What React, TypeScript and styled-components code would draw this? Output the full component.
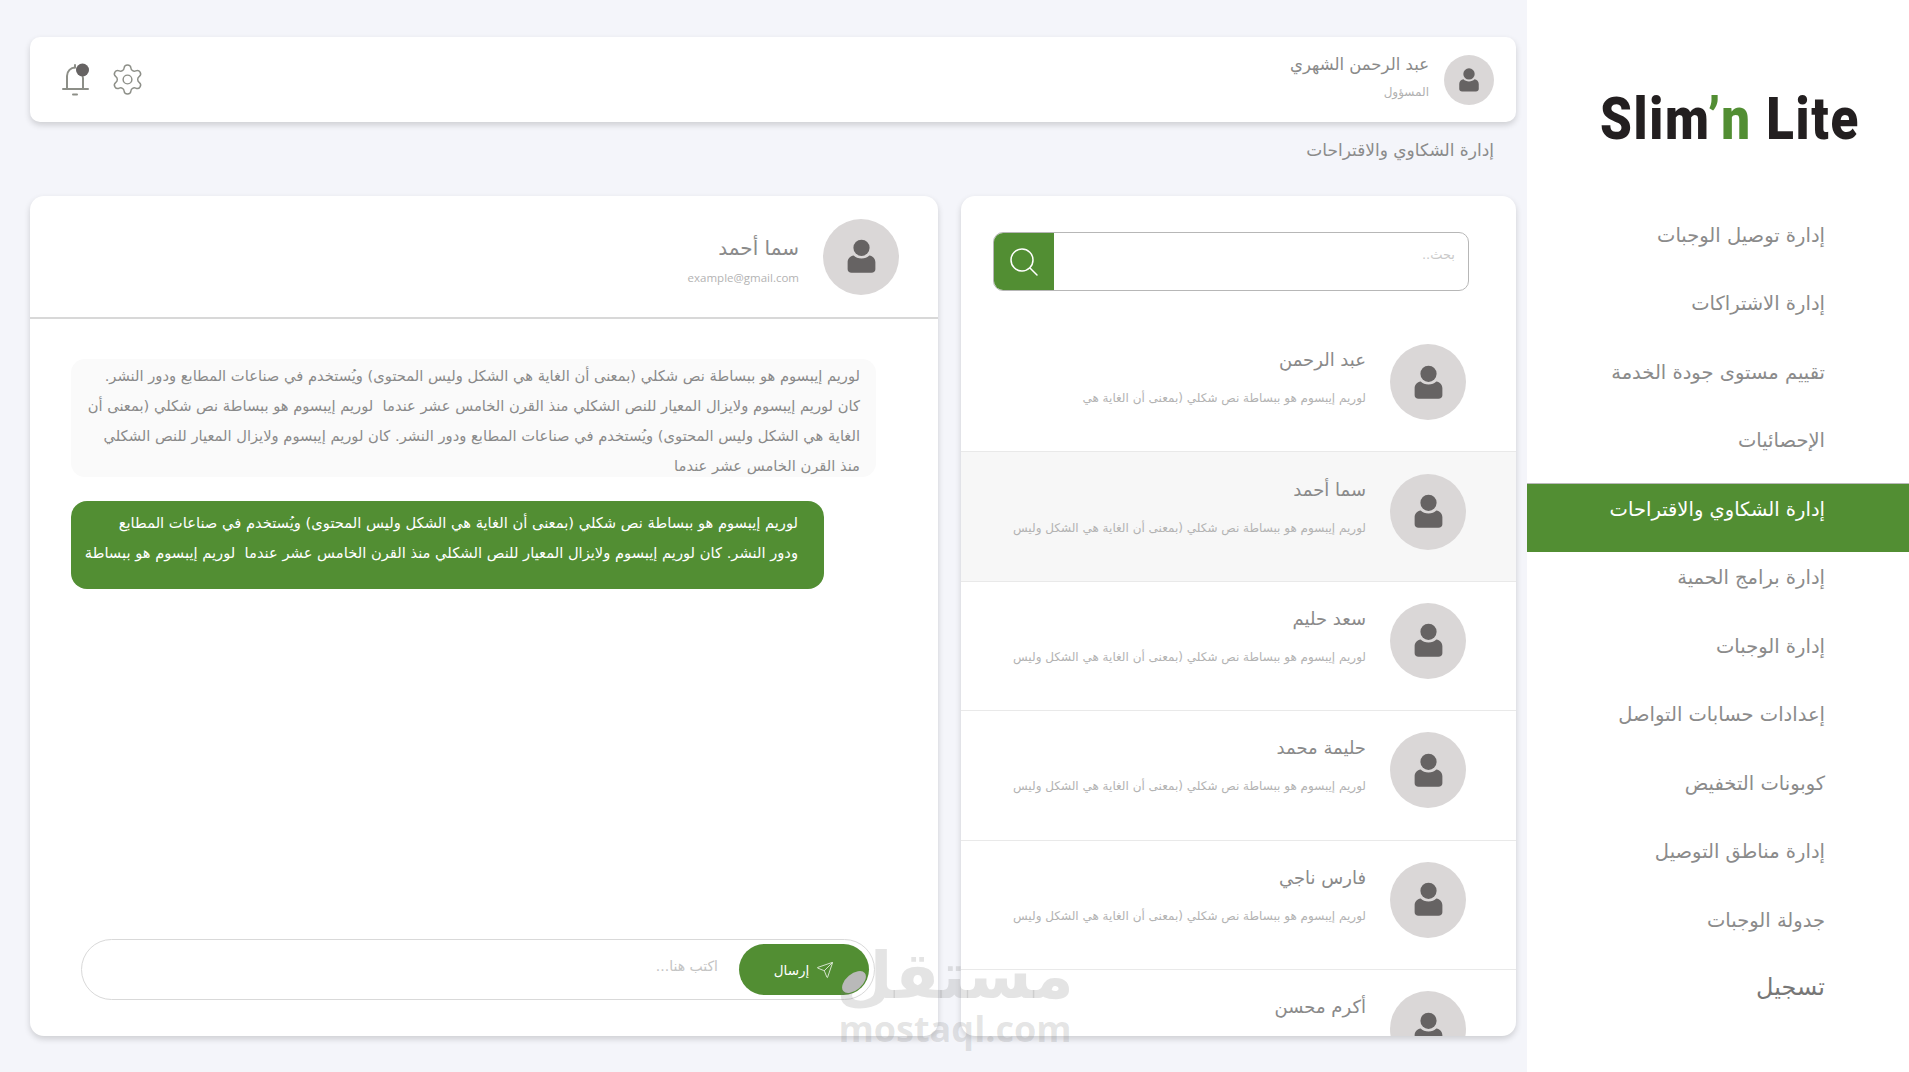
import { Send } from "lucide-react";
import styled, { createGlobalStyle } from "styled-components";

const GREEN = "#528e33";

const MENU = [
  "إدارة توصيل الوجبات",
  "إدارة الاشتراكات",
  "تقييم مستوى جودة الخدمة",
  "الإحصائيات",
  "إدارة الشكاوي والاقتراحات",
  "إدارة برامج الحمية",
  "إدارة الوجبات",
  "إعدادات حسابات التواصل",
  "كوبونات التخفيض",
  "إدارة مناطق التوصيل",
  "جدولة الوجبات",
];

const LONG_SUB = "لوريم إيبسوم هو ببساطة نص شكلي (بمعنى أن الغاية هي الشكل وليس";

const CONTACTS = [
  { name: "عبد الرحمن", sub: "لوريم إيبسوم هو ببساطة نص شكلي (بمعنى أن الغاية هي" },
  { name: "سما أحمد", sub: LONG_SUB, active: true },
  { name: "سعد حليم", sub: LONG_SUB },
  { name: "حليمة محمد", sub: LONG_SUB },
  { name: "فارس ناجي", sub: LONG_SUB },
  { name: "أكرم محسن", sub: LONG_SUB },
];

const GlobalStyle = createGlobalStyle`
  html, body {
    margin: 0;
    padding: 0;
    height: 100%;
    overflow: hidden;
    background: #f4f5fa;
    font-family: "DejaVu Sans", "Noto Sans", sans-serif;
  }
  * {
    box-sizing: border-box;
  }
`;

const Page = styled.div`
  position: relative;
  display: grid;
  grid-template-columns: 382px 1fr;
  grid-template-rows: 1072px;
  width: 1909px;
  height: 1072px;
  overflow: hidden;
`;

const Sidebar = styled.aside`
  background: #ffffff;
  display: flex;
  flex-direction: column;
`;

const Logo = styled.div`
  direction: ltr;
  flex: none;
  height: 209px;
  padding: 84px 0 0 73px;
  font-family: Roboto, sans-serif;
  font-weight: 900;
  font-size: 60px;
  line-height: 70px;
  color: #231f20;
  white-space: nowrap;
`;

const LogoText = styled.span`
  display: inline-block;
  transform: scaleX(0.85);
  transform-origin: left center;
  letter-spacing: 2px;

  b {
    font-weight: 900;
    color: ${GREEN};
  }
`;

const MenuItem = styled.div<{ $active?: boolean }>`
  flex: none;
  height: 68.5px;
  display: flex;
  align-items: center;
  padding: 0 84px 17px 0;
  font-size: 19.5px;
  color: ${(p) => (p.$active ? "#ffffff" : "#8b8b8b")};
  background: ${(p) => (p.$active ? GREEN : "transparent")};
  border-top: 1px solid ${(p) => (p.$active ? "#b9b9b9" : "transparent")};
`;

const Logout = styled(MenuItem)`
  padding-bottom: 21px;
  font-size: 24px;
  color: #777777;
`;

const Main = styled.main`
  min-height: 0;
  display: flex;
  flex-direction: column;
  padding: 37px 11px 36px 30px;
`;

const TopBar = styled.header`
  height: 85px;
  flex: none;
  display: flex;
  align-items: center;
  justify-content: space-between;
  padding: 0 22px 0 30px;
  background: #ffffff;
  border-radius: 10px;
  box-shadow: 0 3px 6px rgba(0, 0, 0, 0.16);
`;

const Who = styled.div`
  display: flex;
  align-items: center;
  gap: 15px;
`;

const WhoText = styled.div`
  display: flex;
  flex-direction: column;
  gap: 7px;
  margin-top: -6px;
`;

const WhoName = styled.span`
  font-size: 16.5px;
  line-height: 24px;
  color: #8a8a8a;
`;

const WhoRole = styled.span`
  font-size: 12px;
  line-height: 16px;
  color: #b0b0b0;
`;

const Actions = styled.div`
  display: flex;
  align-items: center;
  gap: 18px;
`;

const PageTitle = styled.div`
  flex: none;
  height: 74px;
  padding: 15px 22px 0 0;
  font-size: 17px;
  line-height: 26px;
  color: #8b8b8b;
`;

const Panels = styled.div`
  flex: 1;
  min-height: 0;
  display: grid;
  grid-template-columns: 555px 908px;
  grid-template-rows: minmax(0, 1fr);
  gap: 23px;
`;

const Card = styled.section`
  min-height: 0;
  background: #ffffff;
  border-radius: 14px;
  box-shadow: 0 3px 6px rgba(0, 0, 0, 0.16);
  overflow: hidden;
  display: flex;
  flex-direction: column;
`;

const SearchBar = styled.div`
  flex: none;
  display: flex;
  height: 59px;
  margin: 36px 47px 32px 32px;
  border: 1.5px solid #b7b7b7;
  border-radius: 10px;
  overflow: hidden;
`;

const SearchInput = styled.div`
  flex: 1;
  padding: 12px 13px 0 0;
  font-size: 13px;
  line-height: 20px;
  color: #c9c9c9;
`;

const SearchButton = styled.div`
  width: 60px;
  background: ${GREEN};
  display: flex;
  align-items: center;
  justify-content: center;
`;

const Row = styled.div<{ $active?: boolean }>`
  flex: none;
  height: 129.4px;
  display: flex;
  align-items: center;
  gap: 24px;
  padding: 0 50px 10px 0;
  background: ${(p) => (p.$active ? "#f7f7f7" : "transparent")};
  border-bottom: 1px solid #e9e9e9;
`;

const RowText = styled.div`
  display: flex;
  flex-direction: column;
  gap: 18px;
  margin-top: -10px;
`;

const RowName = styled.span`
  font-size: 18px;
  line-height: 24px;
  color: #8a8a8a;
`;

const RowSub = styled.span`
  font-size: 12px;
  line-height: 16px;
  color: #b3b3b3;
  white-space: nowrap;
`;

const Avatar = styled.div<{ $size: number }>`
  flex: none;
  width: ${(p) => p.$size}px;
  height: ${(p) => p.$size}px;
  border-radius: 50%;
  background: #dad7d7;
  display: flex;
  align-items: center;
  justify-content: center;
`;

const ChatHeader = styled.div`
  flex: none;
  height: 123px;
  display: flex;
  align-items: center;
  gap: 24px;
  padding: 0 39px 0 0;
  border-bottom: 2px solid #d8d8d8;
`;

const ChatText = styled.div`
  display: flex;
  flex-direction: column;
  gap: 9px;
  margin-top: 8px;
`;

const ChatName = styled.span`
  font-size: 20px;
  line-height: 26px;
  color: #8a8a8a;
`;

const ChatMail = styled.span`
  font-size: 11.5px;
  line-height: 16px;
  color: #b3b3b3;
  font-family: "Open Sans", sans-serif;
`;

const Messages = styled.div`
  flex: 1;
  min-height: 0;
  display: flex;
  flex-direction: column;
  gap: 24px;
  padding: 40px 62px 0 41px;
`;

const Bubble = styled.div`
  font-size: 14.7px;
  line-height: 30px;
`;

const Incoming = styled(Bubble)`
  height: 118px;
  padding: 2px 16px 0 12px;
  background: #fafafa;
  border-radius: 14px;
  color: #8a8a8a;
`;

const Outgoing = styled(Bubble)`
  height: 88px;
  margin-right: 52px;
  padding: 7px 26px 0 8px;
  background: ${GREEN};
  border-radius: 16px;
  color: #ffffff;
`;

const Composer = styled.div`
  flex: none;
  height: 61px;
  margin: 0 63px 36px 51px;
  display: flex;
  align-items: center;
  gap: 21px;
  padding: 0 5px;
  border: 1.5px solid #d9d9d9;
  border-radius: 31px;
`;

const SendButton = styled.div`
  flex: none;
  width: 130px;
  height: 51px;
  display: flex;
  align-items: center;
  justify-content: center;
  gap: 7px;
  background: ${GREEN};
  border-radius: 26px;
  color: #ffffff;
  font-size: 13.5px;
`;

const ComposerHint = styled.span`
  font-size: 14px;
  line-height: 20px;
  margin-top: -7px;
  color: #c4c4c4;
`;

const Watermark = styled.div`
  position: absolute;
  left: 838px;
  top: 935px;
  width: 234px;
  display: flex;
  flex-direction: column;
  align-items: center;
  color: rgba(120, 120, 120, 0.2);
  pointer-events: none;
`;

const WatermarkAr = styled.span`
  font-size: 65px;
  line-height: 82px;
  font-weight: 700;
`;

const WatermarkEn = styled.span`
  direction: ltr;
  font-family: "Open Sans", sans-serif;
  font-weight: 700;
  font-size: 36px;
  line-height: 40px;
  margin-top: -8px;
`;

const WatermarkSwirl = styled.svg`
  position: absolute;
  left: 2px;
  top: 34px;
`;

const UserIcon = ({ size }: { size: number }) => (
  <svg width={size} height={size} viewBox="0 0 32 32" fill="#666363">
    <circle cx="16" cy="8.5" r="7" />
    <path d="M9.2 15.2c1.6 1.6 4 2.6 6.8 2.6s5.2-1 6.8-2.6c3 .6 5.2 2.6 5.2 5.8v6c0 2-1.4 3-3.4 3H7.4C5.4 30 4 29 4 27v-6c0-3.2 2.2-5.2 5.2-5.8z" />
  </svg>
);

const BellIcon = () => (
  <svg width="32" height="36" viewBox="0 0 32 36" fill="none" stroke="#8d8f88" strokeWidth="2" strokeLinecap="round">
    <path d="M7 26V14c0-5 4-8.5 8-8.5" />
    <path d="M21 12c1.5 1 2 2.5 2 4v10" />
    <path d="M3 27h25" />
    <path d="M15 3v2.5" />
    <path d="M13 32.5h4" />
    <circle cx="22.5" cy="8" r="6.5" fill="#666363" stroke="none" />
  </svg>
);

const GearIcon = () => (
  <svg width="35" height="35" viewBox="0 0 24 24" fill="none" stroke="#8d8f88" strokeWidth="1" strokeLinecap="round" strokeLinejoin="round">
    <path d="M9.671 4.136a2.34 2.34 0 0 1 4.659 0 2.34 2.34 0 0 0 3.319 1.915 2.34 2.34 0 0 1 2.33 4.033 2.34 2.34 0 0 0 0 3.831 2.34 2.34 0 0 1-2.33 4.033 2.34 2.34 0 0 0-3.319 1.915 2.34 2.34 0 0 1-4.659 0 2.34 2.34 0 0 0-3.32-1.915 2.34 2.34 0 0 1-2.33-4.033 2.34 2.34 0 0 0 0-3.831A2.34 2.34 0 0 1 6.351 6.051a2.34 2.34 0 0 0 3.32-1.915" />
    <circle cx="12" cy="12" r="3" />
  </svg>
);

const SearchIcon = () => (
  <svg width="30" height="30" viewBox="0 0 30 30" fill="none" stroke="#ffffff" strokeWidth="1.5" strokeLinecap="round">
    <circle cx="13" cy="13" r="11" />
    <path d="M21 21l7 7" />
  </svg>
);

const App = () => {
  return (
    <Page dir="rtl">
      <GlobalStyle />
      <Sidebar>
        <Logo>
          <LogoText>
            Slim<b>’n</b> Lite
          </LogoText>
        </Logo>
        {MENU.map((item) => (
          <MenuItem key={item} $active={item === "إدارة الشكاوي والاقتراحات"}>
            {item}
          </MenuItem>
        ))}
        <Logout>تسجيل</Logout>
      </Sidebar>

      <Main>
        <TopBar>
          <Who>
            <Avatar $size={50}>
              <UserIcon size={26} />
            </Avatar>
            <WhoText>
              <WhoName>عبد الرحمن الشهري</WhoName>
              <WhoRole>المسؤول</WhoRole>
            </WhoText>
          </Who>
          <Actions>
            <GearIcon />
            <BellIcon />
          </Actions>
        </TopBar>

        <PageTitle>إدارة الشكاوي والاقتراحات</PageTitle>

        <Panels>
          <Card>
            <SearchBar>
              <SearchInput>بحث..</SearchInput>
              <SearchButton>
                <SearchIcon />
              </SearchButton>
            </SearchBar>
            {CONTACTS.map((contact) => (
              <Row key={contact.name} $active={contact.active}>
                <Avatar $size={76}>
                  <UserIcon size={37} />
                </Avatar>
                <RowText>
                  <RowName>{contact.name}</RowName>
                  <RowSub>{contact.sub}</RowSub>
                </RowText>
              </Row>
            ))}
          </Card>

          <Card>
            <ChatHeader>
              <Avatar $size={76}>
                <UserIcon size={37} />
              </Avatar>
              <ChatText>
                <ChatName>سما أحمد</ChatName>
                <ChatMail>example@gmail.com</ChatMail>
              </ChatText>
            </ChatHeader>
            <Messages>
              <Incoming>
                لوريم إيبسوم هو ببساطة نص شكلي (بمعنى أن الغاية هي الشكل وليس المحتوى) ويُستخدم في صناعات المطابع ودور النشر. كان لوريم إيبسوم ولايزال المعيار للنص الشكلي منذ القرن الخامس عشر عندما &nbsp;لوريم إيبسوم هو ببساطة نص شكلي (بمعنى أن الغاية هي الشكل وليس المحتوى) ويُستخدم في صناعات المطابع ودور النشر. كان لوريم إيبسوم ولايزال المعيار للنص الشكلي منذ القرن الخامس عشر عندما
              </Incoming>
              <Outgoing>
                لوريم إيبسوم هو ببساطة نص شكلي (بمعنى أن الغاية هي الشكل وليس المحتوى) ويُستخدم في صناعات المطابع
                <br />
                ودور النشر. كان لوريم إيبسوم ولايزال المعيار للنص الشكلي منذ القرن الخامس عشر عندما &nbsp;لوريم إيبسوم هو ببساطة
              </Outgoing>
            </Messages>
            <Composer>
              <SendButton>
                <Send size={18} strokeWidth={1} />
                إرسال
              </SendButton>
              <ComposerHint>اكتب هنا...</ComposerHint>
            </Composer>
          </Card>
        </Panels>
      </Main>

      <Watermark>
        <WatermarkSwirl width="28" height="26" viewBox="0 0 28 26">
          <ellipse cx="14" cy="13" rx="14" ry="8" transform="rotate(-40 14 13)" fill="#b9b9b9" />
        </WatermarkSwirl>
        <WatermarkAr>مستقل</WatermarkAr>
        <WatermarkEn>mostaql.com</WatermarkEn>
      </Watermark>
    </Page>
  );
};

export default App;
